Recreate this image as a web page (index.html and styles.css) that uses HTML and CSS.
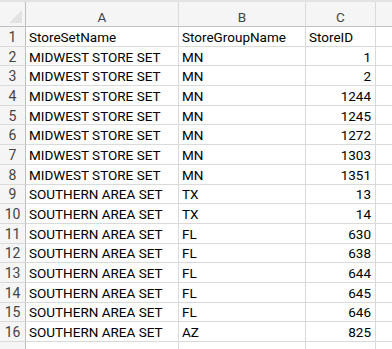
FILE: index.html
```html
<!DOCTYPE html>
<html>
<head>
<meta charset="utf-8">
<link rel="stylesheet" href="styles.css">
</head>
<body>
<div class="sheet">
  <div class="hdr corner"><span class="tri"></span></div>
  <div class="hdr col">A</div>
  <div class="hdr col">B</div>
  <div class="hdr col">C</div>
  <div class="hdr col last"></div>

  <div class="rh">1</div><div class="c">StoreSetName</div><div class="c">StoreGroupName</div><div class="c">StoreID</div><div class="c last"></div>
  <div class="rh">2</div><div class="c">MIDWEST STORE SET</div><div class="c">MN</div><div class="c n">1</div><div class="c last"></div>
  <div class="rh">3</div><div class="c">MIDWEST STORE SET</div><div class="c">MN</div><div class="c n">2</div><div class="c last"></div>
  <div class="rh">4</div><div class="c">MIDWEST STORE SET</div><div class="c">MN</div><div class="c n">1244</div><div class="c last"></div>
  <div class="rh">5</div><div class="c">MIDWEST STORE SET</div><div class="c">MN</div><div class="c n">1245</div><div class="c last"></div>
  <div class="rh">6</div><div class="c">MIDWEST STORE SET</div><div class="c">MN</div><div class="c n">1272</div><div class="c last"></div>
  <div class="rh">7</div><div class="c">MIDWEST STORE SET</div><div class="c">MN</div><div class="c n">1303</div><div class="c last"></div>
  <div class="rh">8</div><div class="c">MIDWEST STORE SET</div><div class="c">MN</div><div class="c n">1351</div><div class="c last"></div>
  <div class="rh">9</div><div class="c">SOUTHERN AREA SET</div><div class="c">TX</div><div class="c n">13</div><div class="c last"></div>
  <div class="rh">10</div><div class="c">SOUTHERN AREA SET</div><div class="c">TX</div><div class="c n">14</div><div class="c last"></div>
  <div class="rh">11</div><div class="c">SOUTHERN AREA SET</div><div class="c">FL</div><div class="c n">630</div><div class="c last"></div>
  <div class="rh">12</div><div class="c">SOUTHERN AREA SET</div><div class="c">FL</div><div class="c n">638</div><div class="c last"></div>
  <div class="rh">13</div><div class="c">SOUTHERN AREA SET</div><div class="c">FL</div><div class="c n">644</div><div class="c last"></div>
  <div class="rh">14</div><div class="c">SOUTHERN AREA SET</div><div class="c">FL</div><div class="c n">645</div><div class="c last"></div>
  <div class="rh">15</div><div class="c">SOUTHERN AREA SET</div><div class="c">FL</div><div class="c n">646</div><div class="c last"></div>
  <div class="rh">16</div><div class="c">SOUTHERN AREA SET</div><div class="c">AZ</div><div class="c n">825</div><div class="c last"></div>
  <div class="rh"></div><div class="c"></div><div class="c"></div><div class="c"></div><div class="c last"></div>
</div>
</body>
</html>
```

FILE: styles.css
```css
html, body {
  margin: 0;
  padding: 0;
  background: #ffffff;
  overflow: hidden;
}
.sheet {
  width: 392px;
  height: 349px;
  overflow: hidden;
  display: grid;
  grid-template-columns: 26px 153px 127px 70px 1fr;
  grid-template-rows: 25px repeat(17, 19.7px);
  border-top: 2px solid #e3e3e3;
  box-sizing: border-box;
  font-family: Roboto, "Liberation Sans", Arial, sans-serif;
  font-size: 13.5px;
  color: #000;
}
.hdr {
  background: #f5f5f5;
  border-bottom: 1px solid #bfbfbf;
  border-right: 1px solid #dadada;
  color: #444444;
  display: flex;
  align-items: center;
  justify-content: center;
  font-size: 13.5px;
  padding-top: 5px;
  box-sizing: border-box;
}
.corner {
  position: relative;
  border-right: 1px solid #bfbfbf;
}
.tri {
  position: absolute;
  right: 3px;
  bottom: 3px;
  width: 0;
  height: 0;
  border-left: 13px solid transparent;
  border-bottom: 13px solid #e2e2e2;
}
.hdr.last, .c.last {
  border-right: none;
}
.rh {
  background: #f5f5f5;
  border-right: 1px solid #bfbfbf;
  border-bottom: 1px solid #dadada;
  color: #444444;
  display: flex;
  align-items: center;
  justify-content: center;
  font-size: 14px;
  box-sizing: border-box;
  padding-top: 1px;
}
.c {
  border-right: 1px solid #dadada;
  border-bottom: 1px solid #dadada;
  display: flex;
  align-items: center;
  padding: 1px 3px 0 3px;
  white-space: nowrap;
  overflow: hidden;
  box-sizing: border-box;
}
.c.n {
  justify-content: flex-end;
  padding-right: 4px;
}
```
